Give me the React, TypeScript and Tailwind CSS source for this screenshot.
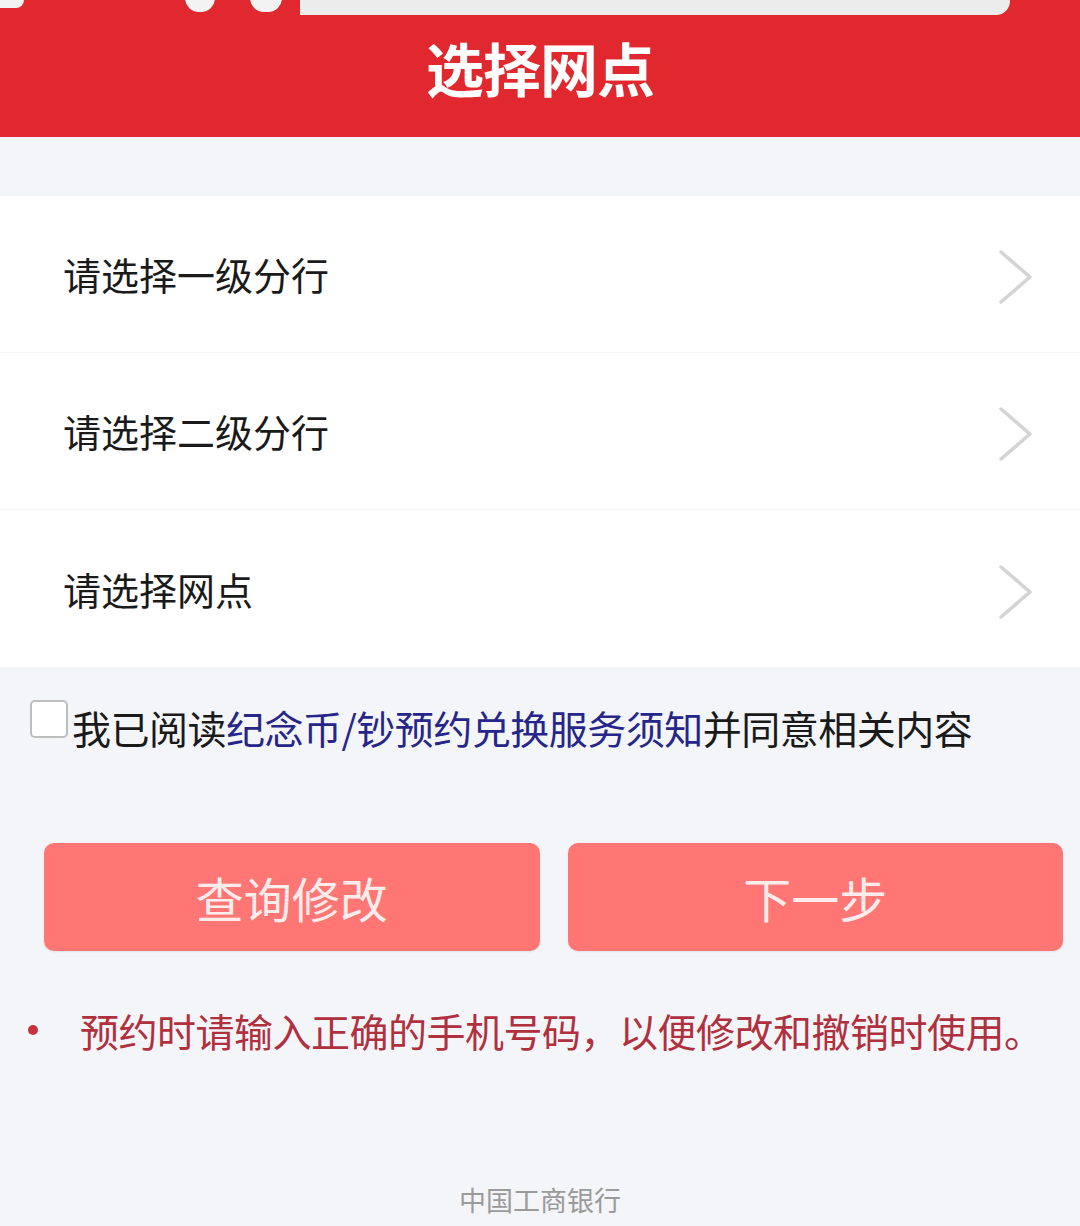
import React, { useState } from 'react';

const cjk = { fontFamily: '"Noto Sans CJK SC", "Noto Sans", sans-serif' };

function Chevron() {
  return (
    <svg width="36" height="56" viewBox="0 0 36 56" fill="none" className="mt-[6px]">
      <path d="M3 3 L32 28 L3 53" stroke="#d4d4d6" strokeWidth="3.5" strokeLinecap="round" strokeLinejoin="round" />
    </svg>
  );
}

function App() {
  const [agreed, setAgreed] = useState(false);
  const rows = ['请选择一级分行', '请选择二级分行', '请选择网点'];

  return (
    <div className="relative min-h-[1226px] w-[1080px] bg-[#f4f5f9]" style={cjk}>
      {/* status bar leftovers at the very top */}
      <div className="absolute left-[300px] top-0 h-[15px] w-[710px] rounded-br-[14px] bg-[#ececec]" />
      <div className="absolute left-[185px] top-[-16px] h-[28px] w-[30px] rounded-full bg-[#f3f3f3]" />
      <div className="absolute left-[250px] top-[-16px] h-[28px] w-[32px] rounded-full bg-[#f3f3f3]" />
      <div className="absolute left-0 top-0 h-[8px] w-[24px] rounded-br-[10px] bg-[#f3f3f3]" />

      <header className="flex h-[137px] items-center justify-center bg-[#e1282e]">
        <h1 className="pb-[4px] text-[58px] font-bold leading-none tracking-[-1px] text-white">选择网点</h1>
      </header>

      <div className="h-[59px]" />

      <div className="bg-white">
        {rows.map((label, i) => (
          <div
            key={label}
            className={`flex h-[157px] items-center justify-between pl-[63px] pr-[46px] ${i < rows.length - 1 ? 'border-b border-[#f5f5f5]' : ''}`}
          >
            <span className="text-[38px] leading-none text-[#1a1a1a]">{label}</span>
            <Chevron />
          </div>
        ))}
      </div>

      <div className="flex items-start pl-[30px] pt-[33px]">
        <button
          onClick={() => setAgreed(!agreed)}
          className="h-[38px] w-[38px] shrink-0 rounded-[5px] border-2 border-[#bdbdbd] bg-white"
        />
        <p className="ml-[4px] mt-[7px] text-[39px] leading-[40px] tracking-[-0.5px] text-[#1a1a1a]">
          我已阅读<span className="text-[#26268a]">纪念币/钞预约兑换服务须知</span>并同意相关内容
        </p>
      </div>

      <div className="mt-[96px] flex gap-[28px] pl-[44px] pr-[17px]">
        <button className="flex h-[108px] flex-1 items-center justify-center rounded-[10px] bg-[#ff7674] text-[48px] text-[#fdecec] shadow-[0_1px_2px_rgba(0,0,0,0.08)]">
          查询修改
        </button>
        <button className="flex h-[108px] flex-1 items-center justify-center rounded-[10px] bg-[#ff7674] text-[48px] text-[#fdecec] shadow-[0_1px_2px_rgba(0,0,0,0.08)]">
          下一步
        </button>
      </div>

      <div className="mt-[54px] flex items-center pl-[28px]">
        <span className="h-[10px] w-[10px] rounded-full bg-[#c8323f]" />
        <p className="ml-[42px] text-[39px] leading-[50px] tracking-[-0.5px] text-[#b0303e]">
          预约时请输入正确的手机号码，以便修改和撤销时使用。
        </p>
      </div>

      <p className="mt-[130px] text-center text-[27px] leading-[30px] text-[#9a9a9a]">中国工商银行</p>
    </div>
  );
}

export default App;
